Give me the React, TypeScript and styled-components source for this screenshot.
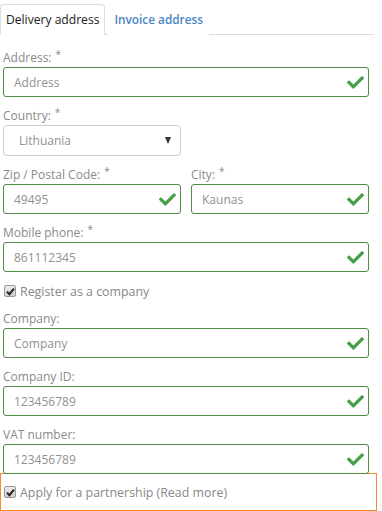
import React from "react";
import styled, { createGlobalStyle } from "styled-components";
import { FaCheck } from "react-icons/fa";

const GlobalStyle = createGlobalStyle`
  body {
    margin: 0;
    background: #fff;
    font-family: "Open Sans", "DejaVu Sans", sans-serif;
    font-size: 12px;
    color: #555;
  }
`;

interface FieldProps {
  label: string;
  value: string;
  required?: boolean;
}

const Field = ({ label, value, required }: FieldProps) => {
  return (
    <Group>
      <Label>
        {label}
        {required && <Star>*</Star>}
      </Label>
      <InputBox>
        <InputText>{value}</InputText>
        <Tick>
          <FaCheck />
        </Tick>
      </InputBox>
    </Group>
  );
};

const Check = () => (
  <CheckBox>
    <svg width="9" height="9" viewBox="0 0 9 9">
      <path d="M1 4.6 L3.4 7.2 L8 1.6" fill="none" stroke="#222" strokeWidth="2" />
    </svg>
  </CheckBox>
);

export default function App() {
  return (
    <Page>
      <GlobalStyle />
      <Tabs>
        <Tab active>Delivery address</Tab>
        <Tab>Invoice address</Tab>
      </Tabs>
      <Form>
        <Field label="Address:" value="Address" required />
        <Group>
          <Label>
            Country:<Star>*</Star>
          </Label>
          <Select>
            <InputText>Lithuania</InputText>
            <Arrow />
          </Select>
        </Group>
        <Row>
          <Field label="Zip / Postal Code:" value="49495" required />
          <Field label="City:" value="Kaunas" required />
        </Row>
        <Field label="Mobile phone:" value="861112345" required />
        <CheckRow>
          <Check />
          Register as a company
        </CheckRow>
        <Field label="Company:" value="Company" />
        <Field label="Company ID:" value="123456789" />
        <LastField>
          <Field label="VAT number:" value="123456789" />
        </LastField>
      </Form>
      <Partnership>
        <Check />
        Apply for a partnership (Read more)
      </Partnership>
    </Page>
  );
}

const Page = styled.div`
  width: 377px;
`;

const Tabs = styled.div`
  display: flex;
  align-items: flex-end;
  height: 34px;
  width: 374px;
  border-bottom: 1px solid #ddd;
`;

const Tab = styled.div<{ active?: boolean }>`
  height: 29px;
  line-height: 29px;
  padding: 0 5px;
  margin-right: 3px;
  margin-bottom: -1px;
  font-size: ${(p) => (p.active ? "12.1px" : "11.8px")};
  border: 1px solid ${(p) => (p.active ? "#ddd" : "transparent")};
  border-bottom-color: ${(p) => (p.active ? "#fff" : "transparent")};
  border-radius: 4px 4px 0 0;
  background: #fff;
  color: ${(p) => (p.active ? "#222" : "#4a86c4")};
  font-weight: ${(p) => (p.active ? 400 : 600)};
`;

const Form = styled.div`
  padding: 14px 8px 0 3px;
  display: flex;
  flex-direction: column;
  gap: 10px;
`;

const Group = styled.div`
  display: flex;
  flex-direction: column;
  flex: 1;
`;

const Label = styled.div`
  height: 18px;
  line-height: 18px;
  color: #8a8a8a;
  font-size: 12px;
`;

const Star = styled.sup`
  font-size: 10px;
  margin-left: 4px;
  vertical-align: 4px;
  line-height: 0;
`;

const InputBox = styled.div`
  box-sizing: border-box;
  height: 30px;
  border: 1px solid #4b8d43;
  border-radius: 3px;
  display: flex;
  align-items: center;
  justify-content: space-between;
  padding: 0 4px 0 10px;
`;

const InputText = styled.span`
  color: #919191;
  font-size: 12px;
`;

const Tick = styled.span`
  display: flex;
  color: #45a049;
  font-size: 17px;
`;

const Select = styled.div`
  box-sizing: border-box;
  width: 178px;
  height: 31px;
  border: 1px solid #ccc;
  border-radius: 4px;
  display: flex;
  align-items: center;
  justify-content: space-between;
  padding: 0 9px 0 15px;
`;

const Arrow = styled.span`
  width: 0;
  height: 0;
  border-left: 3.5px solid transparent;
  border-right: 3.5px solid transparent;
  border-top: 7px solid #333;
`;

const Row = styled.div`
  display: flex;
  gap: 10px;
`;

const CheckRow = styled.label`
  display: flex;
  align-items: center;
  gap: 4px;
  height: 18px;
  padding-left: 1px;
  font-size: 12.4px;
  color: #888;
`;

const CheckBox = styled.span`
  box-sizing: border-box;
  width: 12px;
  height: 12px;
  border: 1px solid #999;
  border-radius: 2px;
  background: linear-gradient(#eee, #ccc);
  display: flex;
  align-items: center;
  justify-content: center;
`;

const LastField = styled.div`
  display: flex;
`;

const Partnership = styled.div`
  box-sizing: border-box;
  margin-top: -1px;
  width: 377px;
  height: 38px;
  border: 1px solid #f58a2e;
  display: flex;
  align-items: center;
  gap: 4px;
  padding-left: 3px;
  font-size: 12.4px;
  color: #888;
`;
